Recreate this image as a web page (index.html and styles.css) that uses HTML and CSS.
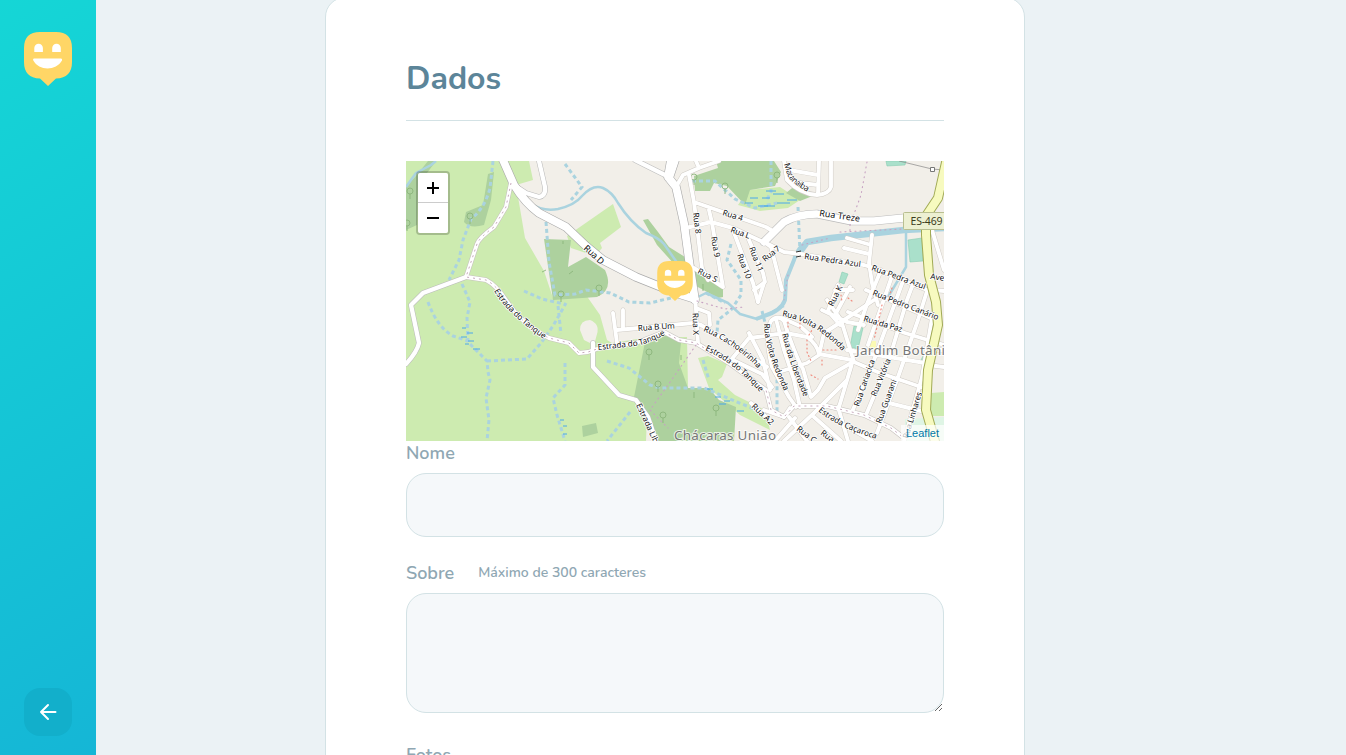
FILE: index.html
```html
<!DOCTYPE html>
<html lang="pt-BR">
<head>
<meta charset="utf-8">
<title>Dados</title>
<link rel="stylesheet" href="styles.css">
</head>
<body>
<div class="page">
  <aside class="sidebar">
    <svg class="logo" width="48" height="54" viewBox="0 0 48 54">
      <path fill="#ffd666" d="M16 0H32Q48 0 48 16V30Q48 46 32 46.500L24 54L16 46.500Q0 46 0 30V16Q0 0 16 0Z"/>
      <path fill="#fff" d="M10.300 20V16a4.300 4.300 0 0 1 8.600 0V20ZM28.200 20V16a4.300 4.300 0 0 1 8.600 0V20ZM10 26.500H37Q38.500 26.500 38 28.500C32 39 15 39 9.300 28.500Q8.500 26.500 10 26.500Z"/>
    </svg>
    <button class="back" type="button" aria-label="Voltar">
      <svg width="24" height="24" viewBox="0 0 24 24" fill="none" stroke="#fff" stroke-width="2" stroke-linecap="round" stroke-linejoin="round"><path d="M19.500 12H5M12 19L5 12L12 5"/></svg>
    </button>
  </aside>
  <main class="main">
    <form class="card">
      <h1 class="title">Dados</h1>
      <div class="map">
        <svg class="map-art" width="538" height="280" viewBox="406 161 538 280">
          <defs>
            <g id="minor">
              <path d="M689 175L694 202L702 268L708 280M694 202L766 227L771 230M686 228L711 222L733 228L763 242M709 210L712 223L723 287L694 268M733 230L753 283L758 302M749 240L763 273L765 282L754 290M764 242L771 247L782 290M764 242L784 252L801 254L864 265L874 268L927 290M676 187L683 175L699 168L719 161M699 168L696 161"/>
              <path d="M831 161V187Q829 194 817 195Q800 194 787 180L784 161M819 161L818 194M789 170L818 175M791 182L818 185M872 235L869 263L872 283L878 305M847 238L871 245M844 248L869 254"/>
              <path d="M866 290L940 322M848 312L905 333L944 345M847 350L925 363M854 362L880 373L924 388M889 403L921 411M881 270L867 304L858 330M892 276L868 345M903 281L876 355L852 412M913 284L907 300L889 360L866 415M927 291L918 320L897 380L877 433M932 318L922 377L904 441M930 217L944 220M932 230L944 270M933 290L944 291M938 350L944 350M928 365L944 367"/>
              <path d="M838 285L828 311L840 325M850 287L834 317M822 310L847 322L864 325M827 300L841 320L854 362M835 290L853 290"/>
              <path d="M796 407L789 397L772 367Q764 335 771 321Q778 314 784 321Q795 355 803 369L811 397L818 390L825 378L853 362M776 319L784 350L794 380L800 407M770 335L786 333L807 337Q817 344 819 354L852 360M779 372L807 363L819 355L824 333L844 320L874 300M782 318L800 326L812 337"/>
              <path d="M852 363L847 380L814 413L784 441M851 367L839 407M789 417L807 441M814 417L841 441M838 407L848 441M764 410L784 417L790 408M853 430L872 441M775 441L795 418M764 283L758 302"/>
              <path d="M613 313L617 343M623 310V328M617 330L693 323L701 325L767 367M695 293L698 343M696 308L709 313L710 325M731 360L749 338L766 336M749 333L763 360L770 390M733 360L762 374L772 387M751 403L766 417"/>
            </g>
            <g id="medium">
              <path d="M511 183L526 193L539 197Q546 196 545 187L539 161M466 277L423 293L411 305L419 343Q417 352 406 364M593 343V367L619 395L636 400L648 417L656 441M635 160L667 176M764 242L784 222Q798 214 817 214L851 221L874 221L904 218L925 217"/>
            </g>
            <path id="treze" d="M764 242L784 222Q798 214 817 214L851 221L874 221L904 218L925 217"/>
            <g id="track">
              <path d="M511 183L506 207L494 227Q479 238 477 244L466 277L486 280Q496 285 506 300Q522 325 549 338L569 343L579 353L588 352L600 348L636 343L664 332L679 340L696 343L729 363L766 390L771 410L784 417L794 406L827 406L864 415L891 428L904 438"/>
            </g>
            <g id="major">
              <path d="M503 160L514 185Q525 203 539 213L566 227L586 246L603 260L636 277L676 293L695 299M671 160L668 177L676 187L684 223L689 260L695 300M675 160L669 178"/>
            </g>
            <g id="tree"><circle r="3" cy="-4"/><path d="M0 -1V4"/></g>
          </defs>

          <rect x="406" y="161" width="538" height="280" fill="#f2efe9"/>
          <g fill="#cdebb0">
            <path d="M406 161H529L533 180L516 185L525 238L544 271L553 298L586 295L600 315L607 340L612 343L650 337L646 441H406Z"/>
            <path d="M567 236L613 204L621 227L600 243L602 248L595 256L571 248Z"/>
            <path d="M646 337H687L688 388H646ZM698 358L708 356L727 364L722 377L718 380L735 395L765 410L770 430L740 415L709 388ZM738 205L748 190L780 187L800 200L788 208L760 211ZM931 393L944 392V416H931Z"/>
          </g>
          <g fill="#add19e">
            <path d="M406 186L416 176L428 161H436L418 185L417 225L406 230ZM488 174L494 172L491 200L484 225Q470 229 464 222L466 212L483 205ZM544 239L571 240L568 267L586 257L605 270Q614 290 597 297L553 300Z"/>
            <path d="M646 337L666 332L681 342L679 363L688 388L709 388L719 400L736 407L734 441H658L650 425L634 397ZM643 220L648 219L658 232L669 247L685 257L688 265H675L657 245ZM694 268L723 286V297L718 298L696 286ZM694 176L718 168L716 161H774L781 172L775 186L750 190L745 205L727 186L714 183L710 191H695ZM786 193L797 184L815 195L800 201ZM582 426L596 423L598 433L583 437Z"/>
          </g>
          <path fill="#f2efe9" d="M580 330Q580 320 590 320Q600 324 597 334L594 345L584 340Z"/>
          <path fill="#aae0cb" stroke="#88ccb1" stroke-width=".6" d="M886 161H906L905 165L887 166ZM908 240L922 238L923 261L910 262ZM842 272L848 274L844 284L839 282ZM854 326L863 328L858 349L850 347ZM923 356L928 357L927 364L920 362Z"/>
          <path fill="#ffff9c" opacity=".7" d="M870 341H876V348H869Z"/>
          <path d="M905 419L944 417V441H905Z" fill="#dff5e5"/>

          <g class="stream">
            <path d="M530 203Q543 212 558 209Q575 205 582 196Q593 184 603 188Q612 192 618 203Q630 222 646 233Q659 238 664 244L678 264M406 187L416 173L431 165L436 161M694 299L706 293L728 303L740 314L757 319L766 315L784 306M906 230V267L888 297"/>
            <path class="river-upper" d="M944 228L904 230L831 238L807 242L799 253"/>
            <path class="river" d="M807 242Q798 247 794 260L786 280L785 300Q781 311 764 316L756 319"/>
          </g>
          <g class="dashed-stream">
            <path d="M493 161L490 188Q485 208 471 219L463 240L459 260L449 280M462 284L470 302L467 318L468 342L487 361L488 372L490 380L486 398L489 420L487 441M487 361L527 359L541 343L553 326L566 303M428 302Q437 327 453 336L468 341M524 291L542 299L564 304M558 306L561 334M565 363V385L553 398L557 415L565 441M565 164L582 187L571 200"/>
            <path d="M546 222L549 262L555 295L575 294L586 290L610 293L629 302L650 303L675 297M607 361L629 368L650 385L660 388H704L730 399L766 414M630 412L607 441M703 360L709 380M692 181L715 181L735 199L755 208L777 203M771 161V192L766 201M798 207L800 252M731 244L727 260L741 280V295L731 310L718 320L717 333M762 311L768 334L777 380V415M706 293L725 303"/>
          </g>
          <g class="marsh"><path d="M462 328H466M467 333H473M461 337H467M468 341H474M465 344H469M473 349H480M560 420H564M563 426H567M563 434H567M707 389H713M715 397H721M724 401H730M719 404H726M737 411H744M750 198H758M745 203H753M758 206H768M766 191H776M773 194H784M762 198H770M777 203H790M787 200H797M764 206H775"/></g>
          <g class="trees">
            <use href="#tree" x="410" y="195"/><use href="#tree" x="407" y="227"/><use href="#tree" x="470" y="220"/><use href="#tree" x="561" y="298"/><use href="#tree" x="599" y="292"/><use href="#tree" x="649" y="356"/><use href="#tree" x="658" y="388"/><use href="#tree" x="663" y="419"/><use href="#tree" x="716" y="412"/><use href="#tree" x="694" y="181"/><use href="#tree" x="725" y="190"/><use href="#tree" x="777" y="179"/>
            <path d="M563 241V244M542 272L546 270M569 274L573 271M681 355V360M694 392V398M703 284V291"/>
          </g>

          <use href="#minor" class="minor-case"/><use href="#medium" class="medium-case"/><use href="#treze" class="treze-case"/><use href="#track" class="track-case"/><use href="#major" class="major-case"/>
          <use href="#minor" class="minor-fill"/><use href="#medium" class="medium-fill"/><use href="#treze" class="treze-fill"/><use href="#track" class="track-fill"/><use href="#major" class="major-fill"/>
          <use href="#track" class="track-dots"/>
          <path class="footway" d="M867 162L861 195L850 225V232M840 232L924 228M802 245L830 238M788 275L784 300M938 195L944 178M696 345L668 385L650 410L668 428M697 301L725 309L745 307"/>
          <path class="red-dots" d="M841 295L842 302M848 298L852 301M788 322V330M800 323V328M807 340V352L811 361M809 335L815 325M823 350H836M822 360V365M811 375L818 379M892 288L888 300M882 305L874 340"/>
          <path d="M899 161L932 169L944 170" fill="none" stroke="#888" stroke-width=".7"/><path fill="#fff" stroke="#777" d="M930.500 167.500H934.500V171.500H930.500Z"/>
          <path class="highway-case" d="M947 158L938 198L926 216V235L929 275L936 302L938 325L928 370L926 410L936 445"/>
          <path class="highway" d="M947 158L938 198L926 216V235L929 275L936 302L938 325L928 370L926 410L936 445"/>
          <path d="M796 252L801 251M796 257L801 256" stroke="#333" stroke-width="1"/>
          <rect x="903.500" y="212.500" width="48" height="17" rx="1" fill="#edf0d2" stroke="#b9bf91"/>
          <text class="shield" x="910.500" y="225" textLength="32">ES-469</text>

          <g class="street">
            <text transform="translate(722 215) rotate(17)" textLength="21">Rua 4</text>
            <text transform="translate(730 232) rotate(20)" textLength="20">Rua L</text>
            <text transform="translate(693 213) rotate(83)" textLength="21">Rua 8</text>
            <text transform="translate(711 237) rotate(80)" textLength="21">Rua 9</text>
            <text transform="translate(737 255) rotate(69)" textLength="26">Rua 10</text>
            <text transform="translate(749 248) rotate(69)" textLength="26">Rua 11</text>
            <text transform="translate(765 262) rotate(-38)" textLength="20">Rua 7</text>
            <text transform="translate(697 273) rotate(27)" textLength="21">Rua S</text>
            <text class="main-street" transform="translate(583 249) rotate(42)" textLength="24">Rua D</text>
            <text class="main-street" transform="translate(819 216) rotate(8)" textLength="41">Rua Treze</text>
            <text transform="translate(804 259) rotate(8)" textLength="57">Rua Pedra Azul</text>
            <text transform="translate(871 270) rotate(20)" textLength="57">Rua Pedra Azul</text>
            <text transform="translate(930 279) rotate(8)">Ave</text>
            <text transform="translate(833 307) rotate(-64)" textLength="22">Rua K</text>
            <text transform="translate(872 295) rotate(21)" textLength="70">Rua Pedro Canário</text>
            <text transform="translate(863 321) rotate(16)" textLength="40">Rua da Paz</text>
            <text transform="translate(859 407) rotate(-71)" textLength="49">Rua Cariacica</text>
            <text transform="translate(876 397) rotate(-68)" textLength="40">Rua Vitória</text>
            <text transform="translate(881 424) rotate(-70)" textLength="46">Rua Guarani</text>
            <text transform="translate(908 439) rotate(-73)" textLength="48">Rua Linhares</text>
            <text transform="translate(796 430) rotate(37)">Rua C</text>
            <text transform="translate(820 434) rotate(37)">Rua</text>
            <text transform="translate(751 407) rotate(43)" textLength="27">Rua A2</text>
            <text transform="translate(638 331) rotate(-4)" textLength="37">Rua B Um</text>
            <text transform="translate(692.500 313) rotate(88)" textLength="22">Rua X</text>
            <text transform="translate(636 405) rotate(65)">Estrada Lib</text>
          </g>
          <defs>
            <path id="p-macanaiba" d="M784 164L787 174Q790 184 816 196"/>
            <path id="p-volta-a" d="M782 316Q816 322 846 355"/>
            <path id="p-volta-b" d="M764 324Q764 350 787 397"/>
            <path id="p-liberdade" d="M782 334Q789 364 807 404"/>
            <path id="p-cacaroca" d="M818 411Q841 430 884 441"/>
            <path id="p-tanque-a" d="M494 291Q507 314 548 342"/>
            <path id="p-tanque-b" d="M598 350L636 346Q649 344 670 332"/>
            <path id="p-tanque-c" d="M705 350Q738 365 764 397"/>
            <path id="p-cachoeirinha" d="M703 331Q739 346 762 373"/>
          </defs>
          <g class="street">
            <text><textPath href="#p-macanaiba" textLength="38">Macanaíba</textPath></text>
            <text><textPath href="#p-volta-a" textLength="71">Rua Volta Redonda</textPath></text>
            <text><textPath href="#p-volta-b" textLength="71">Rua Volta Redonda</textPath></text>
            <text><textPath href="#p-liberdade" textLength="67">Rua da Liberdade</textPath></text>
            <text><textPath href="#p-cacaroca" textLength="65">Estrada Caçaroca</textPath></text>
            <text><textPath href="#p-tanque-a" textLength="70">Estrada do Tanque</textPath></text>
            <text><textPath href="#p-tanque-b" textLength="70">Estrada do Tanque</textPath></text>
            <text><textPath href="#p-tanque-c" textLength="70">Estrada do Tanque</textPath></text>
            <text><textPath href="#p-cachoeirinha" textLength="67">Rua Cachoeirinha</textPath></text>
          </g>
          <g class="place">
            <text x="856" y="355" textLength="89">Jardim Botâni</text>
            <text x="674" y="440" textLength="102">Chácaras União</text>
          </g>
        </svg>
        <div class="zoom-control"><button type="button" class="zoom-button"><svg width="14" height="14"><path d="M1 7H13M7 1V13" stroke="#000" stroke-width="2"/></svg></button><button type="button" class="zoom-button"><svg width="14" height="14"><path d="M1 7H13" stroke="#000" stroke-width="2"/></svg></button></div>
        <svg class="marker" width="36" height="40" viewBox="0 0 48 54">
          <path fill="#ffd666" d="M16 0H32Q48 0 48 16V30Q48 46 32 46.500L24 54L16 46.500Q0 46 0 30V16Q0 0 16 0Z"/>
          <path fill="#fff" d="M10.300 20V16a4.300 4.300 0 0 1 8.600 0V20ZM28.200 20V16a4.300 4.300 0 0 1 8.600 0V20ZM10 26.500H37Q38.500 26.500 38 28.500C32 39 15 39 9.300 28.500Q8.500 26.500 10 26.500Z"/>
        </svg>
        <a class="attribution">Leaflet</a>
      </div>
      <label class="label" for="name">Nome</label>
      <input class="field" id="name">
      <label class="label label-next" for="about"><span>Sobre</span><span class="hint">Máximo de 300 caracteres</span></label>
      <textarea class="field area" id="about"></textarea>
      <label class="label label-photos">Fotos</label>
    </form>
  </main>
</div>
</body>
</html>
```
FILE: styles.css
```css
* { box-sizing: border-box; margin: 0; padding: 0; }
body { background: #ebf2f5; height: 755px; overflow: hidden; font-family: Nunito, Lato, "Open Sans", sans-serif; font-weight: 600; }
.page { display: flex; height: 755px; overflow: hidden; }
.sidebar { width: 96px; flex: none; padding: 32px 24px 19px; display: flex; flex-direction: column; justify-content: space-between; background: linear-gradient(329.54deg, #15b6d6 0%, #15d6d6 100%); }
.logo { display: block; }
.back { width: 48px; height: 48px; border: 0; border-radius: 16px; background: #12afcb; display: flex; align-items: center; justify-content: center; }
.main { padding-left: 229px; }
.card { width: 700px; height: 900px; margin-top: -3px; padding: 61px 80px; background: #fff; border: 1px solid #d3e2e5; border-radius: 20px; }
.title { height: 62px; font-size: 32px; line-height: 40px; font-weight: 700; color: #5c8599; border-bottom: 1px solid #d3e2e5; margin-bottom: 40px; }
.map { position: relative; width: 538px; height: 280px; overflow: hidden; }
.map-art { display: block; }
.zoom-control { position: absolute; left: 10px; top: 10px; width: 34px; height: 64px; border: 2px solid rgba(0,0,0,.2); border-radius: 4px; background-clip: padding-box; overflow: hidden; }
.zoom-button { width: 30px; height: 30px; border: 0; background: #fff; display: flex; align-items: center; justify-content: center; }
.zoom-button:first-child { height: 30px; border-bottom: 1px solid #ccc; }
.zoom-button:last-child { height: 30px; }
.marker { position: absolute; left: 251px; top: 100px; }
.attribution { position: absolute; right: 0; bottom: 0; padding: 0 5px; height: 16px; font: 11px/17px "Liberation Sans", Arial, sans-serif; color: #0078a8; background: rgba(255,255,255,.7); }
.label { display: flex; align-items: center; gap: 24px; height: 24px; margin-bottom: 8px; font-size: 18px; line-height: 24px; color: #8fa7b3; }
.hint { font-size: 14px; }
.field { display: block; width: 100%; height: 64px; background: #f5f8fa; border: 1px solid #d3e2e5; border-radius: 20px; outline: 0; }
.area { height: 120px; resize: vertical; }
.label-next { margin-top: 24px; }
.label-photos { margin-top: 30px; }

.stream { fill: none; stroke: #aad3df; stroke-width: 2.5; stroke-linejoin: round; }
.river { stroke-width: 4; }
.river-upper { stroke-width: 6.5; }
.dashed-stream { fill: none; stroke: #aad3df; stroke-width: 3; stroke-dasharray: 4 3; }
.marsh { stroke: #4aa8ea; stroke-width: 1; }
.trees { fill: none; stroke: #8bb57c; stroke-width: .9; }
.minor-case, .minor-fill, .medium-case, .medium-fill, .treze-case, .treze-fill, .track-case, .track-fill, .track-dots, .major-case, .major-fill, .footway, .red-dots, .highway, .highway-case { fill: none; stroke-linejoin: round; stroke-linecap: round; }
.minor-case { stroke: #cfcbc5; stroke-width: 4.8; }
.minor-fill { stroke: #fff; stroke-width: 3.9; }
.medium-case { stroke: #bbb; stroke-width: 5.4; }
.medium-fill { stroke: #fff; stroke-width: 4.3; }
.treze-case { stroke: #bbb; stroke-width: 8.6; }
.treze-fill { stroke: #fff; stroke-width: 7.4; }
.track-case { stroke: #c6c2be; stroke-width: 5; }
.track-fill { stroke: #fff; stroke-width: 3.9; }
.track-dots { stroke: #c8a9bd; stroke-width: 1; stroke-dasharray: 2 4; stroke-linecap: butt; }
.major-case { stroke: #aaa; stroke-width: 9; }
.major-fill { stroke: #fff; stroke-width: 7.8; }
.footway { stroke: #c7a2c2; stroke-width: 1.1; stroke-dasharray: 1 4; }
.red-dots { stroke: #f08d80; stroke-width: 1.2; stroke-dasharray: 1 3; }
.highway-case { stroke: #a1aa55; stroke-width: 10; }
.highway { stroke: #f7fabf; stroke-width: 8; }
.shield { font: 10.5px "Noto Sans", sans-serif; fill: #3c3c1c; }
.street { font: 8.2px "Noto Sans", sans-serif; fill: #111; stroke: #fff; stroke-width: 1.6px; stroke-linejoin: round; paint-order: stroke; }
.main-street { font-size: 9px; }
.place { font: 13.4px "Noto Sans", sans-serif; fill: #777; stroke: rgba(255,255,255,.75); stroke-width: 2px; paint-order: stroke; }
```
